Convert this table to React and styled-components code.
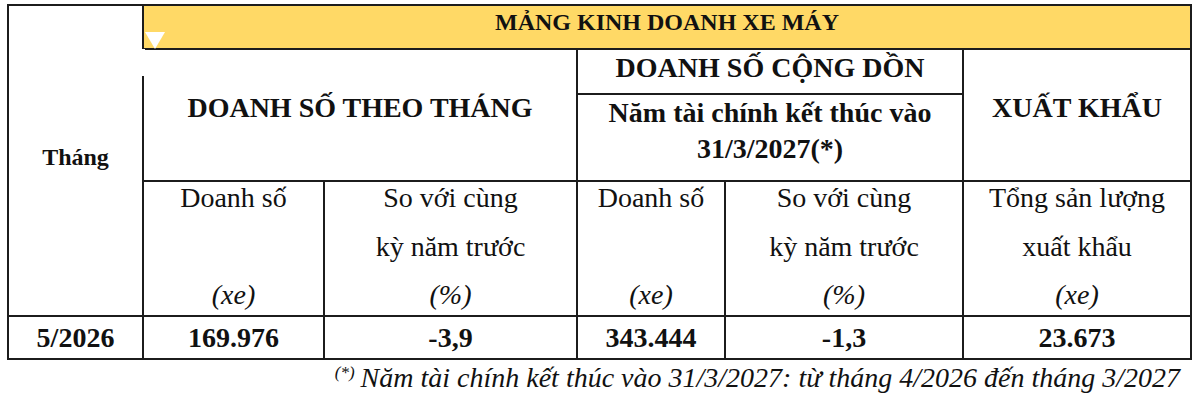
import React from 'react';
import styled, { createGlobalStyle } from 'styled-components';

const GlobalStyle = createGlobalStyle`
  html, body {
    margin: 0;
    padding: 0;
    background: #ffffff;
  }
  body {
    font-family: "Liberation Serif", "Times New Roman", serif;
    color: #111111;
  }
`;

const Page = styled.div`
  position: relative;
  width: 1200px;
  height: 401px;
  padding: 4px 10px 0 7px;
  box-sizing: border-box;
  overflow: hidden;
`;

const Table = styled.table`
  width: 1183px;
  border-collapse: collapse;
  table-layout: fixed;
  border: 2px solid #1c1c1c;
`;

const Cell = styled.td`
  border: 2px solid #1c1c1c;
  padding: 0;
  text-align: center;
  vertical-align: middle;
  font-size: 28px;
  line-height: 32px;
  font-weight: 700;
`;

const MonthHead = styled(Cell)`
  font-size: 24px;
  padding-bottom: 8px;
`;

const BandTitle = styled(Cell)`
  height: 40px;
  background: #ffd966;
  font-size: 24px;
  line-height: 28px;
  vertical-align: top;
  padding-top: 2px;
`;

const GroupHead = styled(Cell)`
  height: ${(props) => props.$h || 41}px;
  vertical-align: ${(props) => (props.$top ? 'top' : 'middle')};
  padding-bottom: ${(props) => (props.$top ? 0 : 14)}px;
  padding-top: ${(props) => (props.$top ? 2 : 0)}px;
`;

const FiscalNote = styled(Cell)`
  height: 85px;
  vertical-align: top;
  line-height: 36px;
  padding-top: 0;
`;

const UnitHead = styled(Cell)`
  height: 133px;
  font-weight: 400;
  vertical-align: top;
`;

const UnitStack = styled.div`
  height: 133px;
  display: flex;
  flex-direction: column;
  justify-content: space-between;
  align-items: center;
  padding: 0 0 4px;
  box-sizing: border-box;
`;

const UnitLine = styled.span`
  display: block;
  min-height: 32px;
  font-style: ${(props) => (props.$italic ? 'italic' : 'normal')};
`;

const ValueCell = styled(Cell)`
  height: 41px;
`;

const Footnote = styled.p`
  margin: 2px 0 0;
  width: 1183px;
  padding-right: 10px;
  box-sizing: border-box;
  text-align: right;
  font-size: 28px;
  line-height: 32px;
  font-style: italic;
`;

const Mark = styled.sup`
  font-size: 17px;
  line-height: 0;
  vertical-align: 9px;
  margin-right: 6px;
`;

const Notch = styled.span`
  position: absolute;
  left: 145px;
  top: 32px;
  width: 0;
  height: 0;
  border-left: 10px solid transparent;
  border-right: 10px solid transparent;
  border-top: 17px solid #ffffff;
`;

const LineGap = styled.span`
  position: absolute;
  left: 140px;
  top: 49px;
  width: 5px;
  height: 27px;
  background: #ffffff;
`;

const widths = [135, 181, 253, 148, 238, 228];

const units = [
  ['Doanh số', '', '(xe)'],
  ['So với cùng', 'kỳ năm trước', '(%)'],
  ['Doanh số', '', '(xe)'],
  ['So với cùng', 'kỳ năm trước', '(%)'],
  ['Tổng sản lượng', 'xuất khẩu', '(xe)'],
];

const values = ['169.976', '-3,9', '343.444', '-1,3', '23.673'];

export default function App() {
  return (
    <>
      <GlobalStyle />
      <Page>
        <Table>
          <colgroup>
            {widths.map((w, i) => (
              <col key={i} style={{ width: w }} />
            ))}
          </colgroup>
          <tbody>
            <tr>
              <MonthHead as="th" rowSpan={4}>
                Tháng
              </MonthHead>
              <BandTitle as="th" colSpan={5}>
                MẢNG KINH DOANH XE MÁY
              </BandTitle>
            </tr>
            <tr>
              <GroupHead as="th" colSpan={2} rowSpan={2}>
                DOANH SỐ THEO THÁNG
              </GroupHead>
              <GroupHead as="th" colSpan={2} $top>
                DOANH SỐ CỘNG DỒN
              </GroupHead>
              <GroupHead as="th" rowSpan={2}>
                XUẤT KHẨU
              </GroupHead>
            </tr>
            <tr>
              <FiscalNote as="th" colSpan={2}>
                Năm tài chính kết thúc vào
                <br />
                31/3/2027(*)
              </FiscalNote>
            </tr>
            <tr>
              {units.map((lines, i) => (
                <UnitHead as="th" key={i}>
                  <UnitStack>
                    <UnitLine>{lines[0]}</UnitLine>
                    <UnitLine>{lines[1]}</UnitLine>
                    <UnitLine $italic>{lines[2]}</UnitLine>
                  </UnitStack>
                </UnitHead>
              ))}
            </tr>
            <tr>
              <ValueCell>5/2026</ValueCell>
              {values.map((v, i) => (
                <ValueCell key={i}>{v}</ValueCell>
              ))}
            </tr>
          </tbody>
        </Table>
        <Footnote>
          <Mark>(*)</Mark>Năm tài chính kết thúc vào 31/3/2027: từ tháng 4/2026
          đến tháng 3/2027
        </Footnote>
        <Notch />
        <LineGap />
      </Page>
    </>
  );
}
